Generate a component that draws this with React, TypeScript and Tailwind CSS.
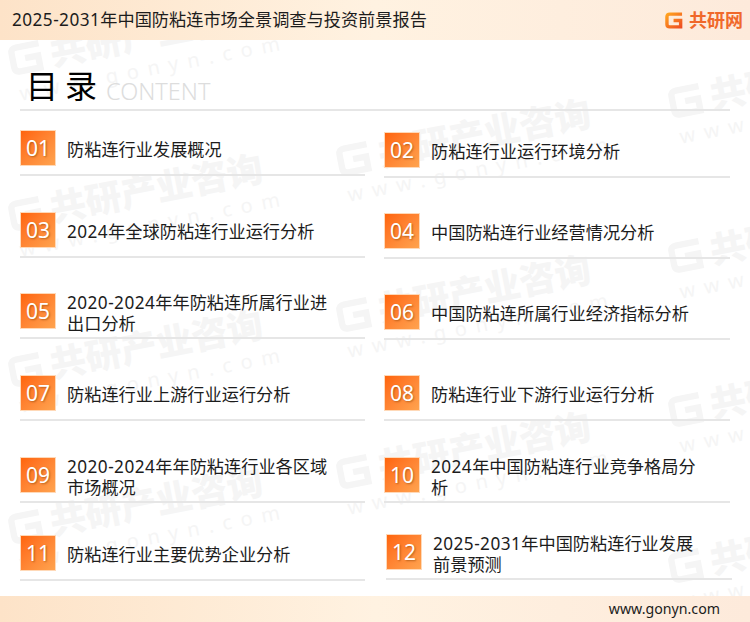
const font = "font-['Noto_Sans','Noto_Sans_CJK_SC',sans-serif]";

const leftItems = [
  { no: "01", text: "防粘连行业发展概况", cls: "mt-[19px]" },
  { no: "03", text: "2024年全球防粘连行业运行分析", cls: "mt-[36px]" },
  { no: "05", text: "2020-2024年年防粘连所属行业进出口分析", cls: "mt-[35px]" },
  { no: "07", text: "防粘连行业上游行业运行分析", cls: "mt-[36px]" },
  { no: "09", text: "2020-2024年年防粘连行业各区域市场概况", cls: "mt-[36px]" },
  { no: "11", text: "防粘连行业主要优势企业分析", cls: "mt-[32px]" },
];

const rightItems = [
  { no: "02", text: "防粘连行业运行环境分析", cls: "mt-[21px]" },
  { no: "04", text: "中国防粘连行业经营情况分析", cls: "mt-[35px]" },
  { no: "06", text: "中国防粘连所属行业经济指标分析", cls: "mt-[35px]" },
  { no: "08", text: "防粘连行业下游行业运行分析", cls: "mt-[35px]" },
  { no: "10", text: "2024年中国防粘连行业竞争格局分析", cls: "mt-[36px]" },
  { no: "12", text: "2025-2031年中国防粘连行业发展前景预测", cls: "mt-[31px] ml-[2px] -mr-[2px]" },
];

const marks = [
  "left-[3px] top-[40px]",
  "left-[3px] top-[196px]",
  "left-[3px] top-[352px]",
  "left-[3px] top-[509px]",
  "left-[331px] top-[141px]",
  "left-[331px] top-[297px]",
  "left-[331px] top-[454px]",
  "left-[663px] top-[83px]",
  "left-[663px] top-[238px]",
  "left-[663px] top-[392px]",
  "left-[663px] top-[548px]",
];

// digits run a little wider in the picture than in Noto Sans
function Label({ text }: { text: string }) {
  return (
    <>
      {text.split(/([\d-]+)/).map((part, i) =>
        i % 2 ? (
          <span key={i} className="tracking-[0.45px]">
            {part}
          </span>
        ) : (
          part
        ),
      )}
    </>
  );
}

function GMark({ className, stroke }: { className: string; stroke: string }) {
  return (
    <svg viewBox="0 0 20 18" className={className} fill="none">
      <defs>
        <linearGradient id="logoG" x1="0" y1="0" x2="1" y2="1">
          <stop offset="0" stopColor="#ffa21f" />
          <stop offset="1" stopColor="#ee4d22" />
        </linearGradient>
      </defs>
      <path
        d="M18 2.2H5Q2 2.2 2 5V13Q2 15.8 5 15.8H16.5V9H9"
        stroke={stroke}
        strokeWidth="3.6"
      />
    </svg>
  );
}

function Watermark({ className }: { className: string }) {
  return (
    <div
      className={`absolute w-[290px] origin-top-left -rotate-[11deg] text-[#f5f5f5] ${className} ${font}`}
    >
      <div className="flex items-center gap-[4px]">
        <GMark className="h-[32px] w-[40px]" stroke="#f5f5f5" />
        <span className="text-[36px] leading-[44px] font-black whitespace-nowrap">共研产业咨询</span>
      </div>
      <div className="ml-[6px] text-[20px] leading-[24px] tracking-[9px] whitespace-nowrap">
        www.gonyn.com
      </div>
    </div>
  );
}

function Item({ no, text, cls }: { no: string; text: string; cls: string }) {
  return (
    <div className={`border-b-2 border-[#e6e6e6] pb-[8px] ${cls}`}>
      <div className="flex h-[36px] items-center">
        <div className="flex h-[36px] w-[36px] shrink-0 items-center justify-center border border-[#ffd9b8] bg-gradient-to-br from-[#ff6408] to-[#ffa34e] pt-[1px] text-[21px] text-white [text-shadow:1px_1px_2px_rgba(130,60,0,0.55)]">
          {no}
        </div>
        <div className="mt-[3px] ml-[11px] w-[272px] text-[17.2px] leading-[21px] text-[#1c1c1c]">
          <Label text={text} />
        </div>
      </div>
    </div>
  );
}

export default function App() {
  return (
    <div className={`relative h-[622px] w-[750px] overflow-hidden bg-white ${font}`}>
      {marks.map((m) => (
        <Watermark key={m} className={m} />
      ))}

      <div className="relative flex h-[622px] flex-col">
        <header className="flex h-[40px] shrink-0 items-center justify-between bg-gradient-to-r from-[#fde3c8] via-[#fff2e1] to-[#fdeadb] pr-[7px] pl-[12px]">
          <h1 className="text-[17.2px] font-normal text-[#1c1c1c]">
            <Label text="2025-2031年中国防粘连市场全景调查与投资前景报告" />
          </h1>
          <div className="flex items-center gap-[5px]">
            <GMark className="h-[17px] w-[19px]" stroke="url(#logoG)" />
            <span className="text-[18px] leading-[20px] font-bold text-[#f0682a]">共研网</span>
          </div>
        </header>

        <main className="flex-1 px-[20px]">
          <div className="flex items-end border-b-2 border-[#e6e6e6] pl-[6px]">
            <span className="mt-[23px] text-[32px] leading-[46px] tracking-[7px] text-black">目录</span>
            <span className="ml-[2px] text-[23.5px] leading-[36px] font-light text-[#dddddd]">CONTENT</span>
          </div>
          <div className="flex w-[710px] gap-[19px]">
            <div className="flex w-[345px] flex-col">
              {leftItems.map((it) => (
                <Item key={it.no} {...it} />
              ))}
            </div>
            <div className="flex w-[346px] flex-col">
              {rightItems.map((it) => (
                <Item key={it.no} {...it} />
              ))}
            </div>
          </div>
        </main>

        <footer className="flex h-[26px] shrink-0 items-center justify-end bg-gradient-to-r from-[#fde3c8] via-[#fff2e1] to-[#fdeadb] pr-[30px] text-[14.2px] text-[#1c1c1c]">
          www.gonyn.com
        </footer>
      </div>
    </div>
  );
}
